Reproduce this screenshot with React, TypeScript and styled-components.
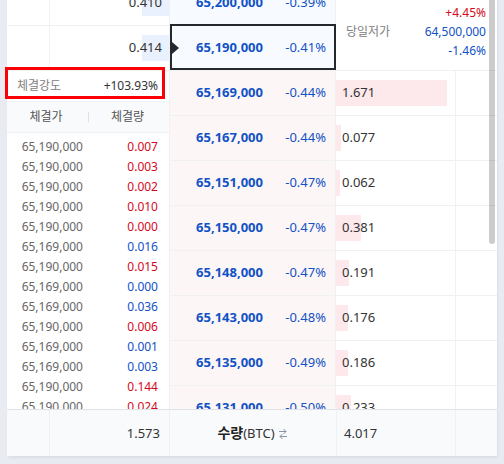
import React from "react";
import styled, { createGlobalStyle, css } from "styled-components";

const BLUE = "#1152c5";
const RED = "#d40a1c";
const LINE = "#f0f1f3";

const GlobalStyle = createGlobalStyle`
  * { box-sizing: border-box; }
  body {
    margin: 0;
    background: #e8ebf1;
    color: #333;
    font: 12px/20px "Noto Sans", "Noto Sans CJK KR", sans-serif;
  }
`;

const Page = styled.main`
  display: flex;
  flex-direction: column;
  height: 100vh;
  padding-bottom: 8px;
`;

const Viewport = styled.section`
  position: relative;
  flex: 1;
  min-height: 0;
  overflow: hidden;
  padding: 0 7px;
`;

const ScrollThumb = styled.div`
  position: absolute;
  top: 0;
  right: 9px;
  width: 6px;
  height: 244px;
  border-radius: 0 0 3px 3px;
  background: rgba(0, 0, 0, 0.2);
`;

const Book = styled.table`
  width: 100%;
  margin-top: -19px;
  table-layout: fixed;
  border-collapse: separate;
  border-spacing: 0;
  background: #fff;
  box-shadow: 1px 0 2px rgba(0, 0, 0, 0.06);
`;

const Col = styled.col<{ $width: number }>`
  width: ${(p) => p.$width}px;
`;

const Cell = styled.td<{ $divided?: boolean }>`
  height: 45px;
  padding: 0;
  border-bottom: 1px solid ${LINE};
  ${(p) => p.$divided && css`border-left: 1px solid ${LINE};`}
`;

const PanelCell = styled.td<{ $align: "top" | "bottom" }>`
  padding: 0;
  vertical-align: ${(p) => p.$align};
  border-bottom: 1px solid ${LINE};
`;

const PriceCell = styled(Cell)<{ $side: "ask" | "bid" }>`
  position: relative;
  border-left: 1px solid ${LINE};
  border-right: 1px solid ${LINE};
  background: ${(p) => (p.$side === "ask" ? "#f7fbff" : "#fdf6f6")};
`;

const PriceLine = styled.div`
  display: grid;
  grid-template-columns: 93fr 63fr;
  padding: 0 9px 2px 0;
  text-align: right;
  color: ${BLUE};
  font-size: 13px;
`;

const Price = styled.strong`
  font-weight: 700;
`;

const CurrentFrame = styled.div`
  position: absolute;
  inset: -2px -1px 0 0;
  border: 2px solid #25282c;
`;

const Pointer = styled.svg`
  position: absolute;
  top: 16px;
  left: 0;
  width: 9px;
  height: 12px;
  fill: #25282c;
`;

const Depth = styled.div<{ $side: "ask" | "bid" }>`
  position: relative;
  display: flex;
  align-items: center;
  height: 26px;
  padding-bottom: 2px;
  font-size: 13px;
  ${(p) =>
    p.$side === "ask"
      ? css`justify-content: flex-end; padding-right: 7px;`
      : css`padding-left: 6px;`}
`;

const DepthBar = styled.div<{ $side: "ask" | "bid" }>`
  position: absolute;
  top: 0;
  bottom: 0;
  ${(p) =>
    p.$side === "ask"
      ? css`right: 0; background: #e8f1fd;`
      : css`left: 0; background: #fde8ec;`}
`;

const Amount = styled.span`
  position: relative;
`;

const Summary = styled.dl`
  display: grid;
  grid-template-columns: auto 1fr;
  margin: 0;
  padding: 0 11px 10px 10px;
  line-height: 19px;
`;

const SummaryName = styled.dt`
  color: #808080;
`;

const SummaryValue = styled.dd<{ $color: string }>`
  grid-column: 2;
  margin: 0;
  text-align: right;
  color: ${(p) => p.$color};
`;

const Strength = styled.div`
  position: relative;
  display: flex;
  align-items: center;
  justify-content: space-between;
  height: 31px;
  padding: 0 11px 0 10px;
  border-bottom: 1px solid ${LINE};
`;

const StrengthName = styled.span`
  color: #808080;
`;

const Highlight = styled.div`
  position: absolute;
  inset: -4px 4px 2px -2px;
  border: 3px solid #fb0007;
`;

const Trades = styled.table`
  width: 100%;
  table-layout: fixed;
  border-collapse: separate;
  border-spacing: 0;
`;

const TradeHead = styled.th`
  height: 31px;
  padding: 0;
  background: #f9fafc;
  border-bottom: 1px solid ${LINE};
  color: #555;
  font-weight: 400;
`;

const HeadLabel = styled.div<{ $ruled?: boolean }>`
  padding-right: 3px;
  line-height: 10px;
  ${(p) => p.$ruled && css`border-left: 1px solid #dfe1e6;`}
`;

const TradeBody = styled.tbody`
  &::before {
    content: "";
    display: block;
    height: 4px;
  }
`;

const TradeCell = styled.td<{ $color: string; $inset: number }>`
  height: 20px;
  padding: 0 ${(p) => p.$inset}px 0 0;
  text-align: right;
  color: ${(p) => p.$color};
`;

const Totals = styled.footer`
  display: grid;
  grid-template-columns: 42fr 120fr 167fr 119fr 42fr;
  height: 47px;
  margin: 0 7px;
  background: #f9fafc;
  border-top: 1px solid #dfe2e7;
  box-shadow: 1px 2px 3px rgba(0, 0, 0, 0.06);
`;

const Total = styled.div<{ $align?: "flex-start" | "center" | "flex-end" }>`
  display: flex;
  align-items: center;
  justify-content: ${(p) => p.$align ?? "center"};
  padding: 0 9px 0 7px;
  font-size: 13px;

  & + & {
    border-left: 1px solid ${LINE};
  }
`;

const UnitButton = styled.button`
  display: flex;
  align-items: center;
  padding: 0;
  border: 0;
  background: none;
  color: #333;
  font: inherit;
  cursor: pointer;
`;

const UnitName = styled.strong`
  color: #222;
  font-size: 14px;
`;

const SwapIcon = styled.svg`
  width: 8px;
  height: 10px;
  margin: 2px 0 0 4px;
  fill: none;
  stroke: #8d8fa6;
`;

const FULL_DEPTH = 1.791;

const asks = [
  { qty: "0.410", price: "65,200,000", rate: "-0.39%" },
  { qty: "0.414", price: "65,190,000", rate: "-0.41%", current: true },
];

const bids = [
  { qty: "1.671", price: "65,169,000", rate: "-0.44%" },
  { qty: "0.077", price: "65,167,000", rate: "-0.44%" },
  { qty: "0.062", price: "65,151,000", rate: "-0.47%" },
  { qty: "0.381", price: "65,150,000", rate: "-0.47%" },
  { qty: "0.191", price: "65,148,000", rate: "-0.47%" },
  { qty: "0.176", price: "65,143,000", rate: "-0.48%" },
  { qty: "0.186", price: "65,135,000", rate: "-0.49%" },
  { qty: "0.233", price: "65,131,000", rate: "-0.50%" },
];

const trades: [string, string, "up" | "down"][] = [
  ["65,190,000", "0.007", "up"],
  ["65,190,000", "0.003", "up"],
  ["65,190,000", "0.002", "up"],
  ["65,190,000", "0.010", "up"],
  ["65,190,000", "0.000", "up"],
  ["65,169,000", "0.016", "down"],
  ["65,190,000", "0.015", "up"],
  ["65,169,000", "0.000", "down"],
  ["65,169,000", "0.036", "down"],
  ["65,190,000", "0.006", "up"],
  ["65,169,000", "0.001", "down"],
  ["65,169,000", "0.003", "down"],
  ["65,190,000", "0.144", "up"],
  ["65,190,000", "0.024", "up"],
];

function DepthLevel({ side, qty }: { side: "ask" | "bid"; qty: string }) {
  return (
    <Depth $side={side}>
      <DepthBar $side={side} style={{ width: `${(Number(qty) / FULL_DEPTH) * 100}%` }} />
      <Amount>{qty}</Amount>
    </Depth>
  );
}

function PriceLevel(props: { side: "ask" | "bid"; price: string; rate: string; current?: boolean }) {
  return (
    <PriceCell $side={props.side}>
      <PriceLine>
        <Price>{props.price}</Price>
        <span>{props.rate}</span>
      </PriceLine>
      {props.current && (
        <>
          <CurrentFrame />
          <Pointer viewBox="0 0 9 12" aria-hidden="true">
            <path d="M0 0h2l7 6-7 6H0z" />
          </Pointer>
        </>
      )}
    </PriceCell>
  );
}

function DaySummary() {
  return (
    <Summary>
      <SummaryValue $color={RED}>+4.45%</SummaryValue>
      <SummaryName>당일저가</SummaryName>
      <SummaryValue $color={BLUE}>64,500,000</SummaryValue>
      <SummaryValue $color={BLUE}>-1.46%</SummaryValue>
    </Summary>
  );
}

function TradePanel() {
  return (
    <>
      <Strength>
        <StrengthName>체결강도</StrengthName>
        <span>+103.93%</span>
        <Highlight />
      </Strength>
      <Trades>
        <thead>
          <tr>
            <TradeHead><HeadLabel>체결가</HeadLabel></TradeHead>
            <TradeHead><HeadLabel $ruled>체결량</HeadLabel></TradeHead>
          </tr>
        </thead>
        <TradeBody>
          {trades.map(([price, qty, dir], i) => (
            <tr key={i}>
              <TradeCell $color="#666" $inset={5}>{price}</TradeCell>
              <TradeCell $color={dir === "up" ? RED : BLUE} $inset={11}>{qty}</TradeCell>
            </tr>
          ))}
        </TradeBody>
      </Trades>
    </>
  );
}

export default function App() {
  return (
    <>
      <GlobalStyle />
      <Page>
        <Viewport>
          <Book>
            <colgroup>
              <Col $width={42} />
              <Col $width={120} />
              <Col $width={167} />
              <Col $width={119} />
              <Col $width={42} />
            </colgroup>
            <tbody>
              {asks.map((level, i) => (
                <tr key={level.price}>
                  <Cell />
                  <Cell $divided><DepthLevel side="ask" qty={level.qty} /></Cell>
                  <PriceLevel side="ask" price={level.price} rate={level.rate} current={level.current} />
                  {i === 0 && (
                    <PanelCell $align="bottom" colSpan={2} rowSpan={asks.length}><DaySummary /></PanelCell>
                  )}
                </tr>
              ))}
              {bids.map((level, i) => (
                <tr key={level.price}>
                  {i === 0 && (
                    <PanelCell $align="top" colSpan={2} rowSpan={bids.length}><TradePanel /></PanelCell>
                  )}
                  <PriceLevel side="bid" price={level.price} rate={level.rate} />
                  <Cell><DepthLevel side="bid" qty={level.qty} /></Cell>
                  <Cell $divided />
                </tr>
              ))}
            </tbody>
          </Book>
          <ScrollThumb />
        </Viewport>
        <Totals>
          <Total />
          <Total $align="flex-end">1.573</Total>
          <Total>
            <UnitButton type="button">
              <UnitName>수량</UnitName>(BTC)
              <SwapIcon viewBox="0 0 8 10" aria-hidden="true">
                <path d="M0 2.5h7M4.5 0L7 2.5 4.5 5M8 7.5H1M3.5 5L1 7.5 3.5 10" />
              </SwapIcon>
            </UnitButton>
          </Total>
          <Total $align="flex-start">4.017</Total>
          <Total />
        </Totals>
      </Page>
    </>
  );
}
